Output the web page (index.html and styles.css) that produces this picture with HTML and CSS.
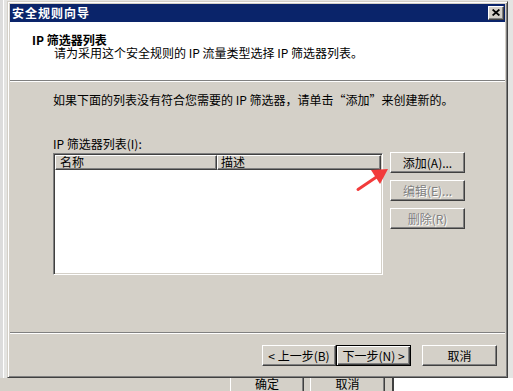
FILE: index.html
```html
<!DOCTYPE html>
<html lang="zh-CN">
<head>
<meta charset="utf-8">
<title>安全规则向导</title>
<link rel="stylesheet" href="styles.css">
</head>
<body>
<div class="window">
  <div class="titlebar">
    <span class="title">安全规则向导</span>
    <span class="close"><svg width="8" height="7" viewBox="0 0 8 7"><path d="M0.6 0.5L7.4 6.5M7.4 0.5L0.6 6.5" stroke="#000" stroke-width="1.7" fill="none"/></svg></span>
  </div>
  <div class="header">
    <div class="h1">IP 筛选器列表</div>
    <div class="h2">请为采用这个安全规则的 IP 流量类型选择 IP 筛选器列表。</div>
  </div>
  <div class="etch"></div>
  <div class="main">
    <div class="intro">如果下面的列表没有符合您需要的 IP 筛选器，请单击“添加”来创建新的。</div>
    <div class="label">IP 筛选器列表(I):</div>
    <div class="row">
      <div class="list">
        <div class="lv-head">
          <div class="col c1">名称</div>
          <div class="col c2">描述</div>
        </div>
      </div>
      <div class="side">
        <div class="btn">添加(A)...</div>
        <div class="btn disabled">编辑(E)...</div>
        <div class="btn disabled">删除(R)</div>
      </div>
    </div>
  </div>
  <div class="etch"></div>
  <div class="footer">
    <div class="btn back">&lt; 上一步(B)</div>
    <div class="btn default">下一步(N) &gt;</div>
    <div class="btn cancel">取消</div>
  </div>
</div>
<div class="behind">
  <div class="b-space"></div>
  <div class="b-btn b-ok">确定</div>
  <div class="b-btn b-cancel">取消</div>
  <div class="b-line"></div>
  <div class="b-white"></div>
</div>
<svg class="arrow" width="45" height="35" viewBox="0 0 45 35">
  <line x1="8" y1="29.5" x2="28" y2="16" stroke="#f23b3b" stroke-width="3" stroke-linecap="round"/>
  <polygon points="38,9 21,10 30,24" fill="#f23b3b"/>
</svg>
</body>
</html>
```
FILE: styles.css
```css
html, body {
  margin: 0;
  padding: 0;
  height: 100%;
}
body {
  width: 513px;
  height: 391px;
  overflow: hidden;
  position: relative;
  background: linear-gradient(to right, #dcdcdc 0, #dcdcdc 3px, #ffffff 3px, #ffffff 4px, #e4e4e2 4px);
  font-family: "Noto Sans CJK SC", sans-serif;
  font-size: 12px;
  color: #000;
}
.window {
  margin: 1px 0 0 7px;
  width: 501px;
  height: 377px;
  box-sizing: border-box;
  border: 1px solid;
  border-color: #d4d0c8 #404040 #404040 #d4d0c8;
  box-shadow: inset 1px 1px 0 #ffffff, inset -1px -1px 0 #808080;
  padding: 2px;
  background: #d4d0c8;
  display: flex;
  flex-direction: column;
  position: relative;
  z-index: 1;
}
.titlebar {
  height: 18px;
  flex: none;
  background: #0a246a;
  display: flex;
  align-items: center;
  justify-content: space-between;
  padding: 0 1px 0 2px;
}
.title {
  color: #fff;
  font-weight: bold;
  letter-spacing: 1px;
  line-height: 12px;
}
.close {
  width: 16px;
  height: 14px;
  box-sizing: border-box;
  background: #d4d0c8;
  border: 1px solid;
  border-color: #ffffff #404040 #404040 #ffffff;
  box-shadow: inset -1px -1px 0 #808080;
  display: flex;
  align-items: center;
  justify-content: center;
  padding: 0 1px 1px 0;
}
.close svg { display: block; }
.header {
  height: 58px;
  flex: none;
  background: #ffffff;
  box-sizing: border-box;
  padding: 11px 0 0 22px;
}
.h1 {
  font-weight: bold;
  line-height: 13px;
}
.h2 {
  line-height: 13px;
  padding-left: 22px;
}
.etch {
  flex: none;
  height: 0;
  border-top: 1px solid #808080;
  border-bottom: 1px solid #ffffff;
}
.main {
  flex: 1;
  padding: 12px 0 0 43px;
}
.intro {
  line-height: 12px;
}
.label {
  line-height: 12px;
  margin-top: 32px;
}
.row {
  display: flex;
  margin-top: 2px;
  gap: 7px;
}
.list {
  margin-top: 1px;
  width: 330px;
  height: 122px;
  box-sizing: border-box;
  border: 1px solid;
  border-color: #808080 #ffffff #ffffff #808080;
  box-shadow: inset 1px 1px 0 #404040, inset -1px -1px 0 #d4d0c8;
  padding: 1px;
  background: #fff;
}
.lv-head {
  display: flex;
  height: 15px;
  background: #d4d0c8;
}
.col {
  box-sizing: border-box;
  height: 15px;
  border: 1px solid;
  border-color: #ffffff #404040 #404040 #ffffff;
  box-shadow: inset -1px -1px 0 #808080;
  line-height: 12px;
  padding-left: 4px;
}
.c1 { width: 162px; }
.c2 { flex: 1; padding-left: 3px; }
.side {
  display: flex;
  flex-direction: column;
  gap: 7px;
}
.btn {
  width: 75px;
  height: 21px;
  box-sizing: border-box;
  border: 1px solid;
  border-color: #ffffff #404040 #404040 #ffffff;
  box-shadow: inset -1px -1px 0 #808080;
  background: #d4d0c8;
  display: flex;
  align-items: center;
  justify-content: center;
  line-height: 12px;
  white-space: nowrap;
}
.disabled {
  color: #808080;
  text-shadow: 1px 1px 0 #ffffff;
}
.footer {
  flex: none;
  display: flex;
  justify-content: flex-end;
  padding: 11px 8px 9px;
}
.back { width: 74px; }
.default {
  border: 1px solid #000;
  box-shadow: inset 1px 1px 0 #ffffff, inset -1px -1px 0 #404040, inset -2px -2px 0 #808080;
}
.cancel { margin-left: 11px; }
.behind {
  display: flex;
  height: 13px;
  background: #d4d0c8;
  overflow: hidden;
}
.b-space { width: 230px; flex: none; }
.b-btn {
  flex: none;
  box-sizing: border-box;
  height: 13px;
  border-left: 1px solid #ffffff;
  border-right: 1px solid #404040;
  box-shadow: inset -1px 0 0 #808080;
  text-align: center;
  line-height: 11px;
}
.b-ok { width: 74px; margin-right: 6px; }
.b-cancel { width: 75px; }
.b-line {
  flex: none;
  width: 2px;
  margin-left: 7px;
  background: #404040;
}
.b-white { flex: 1; background: #ffffff; }
.arrow {
  position: absolute;
  left: 350px;
  top: 160px;
  z-index: 2;
}
```
